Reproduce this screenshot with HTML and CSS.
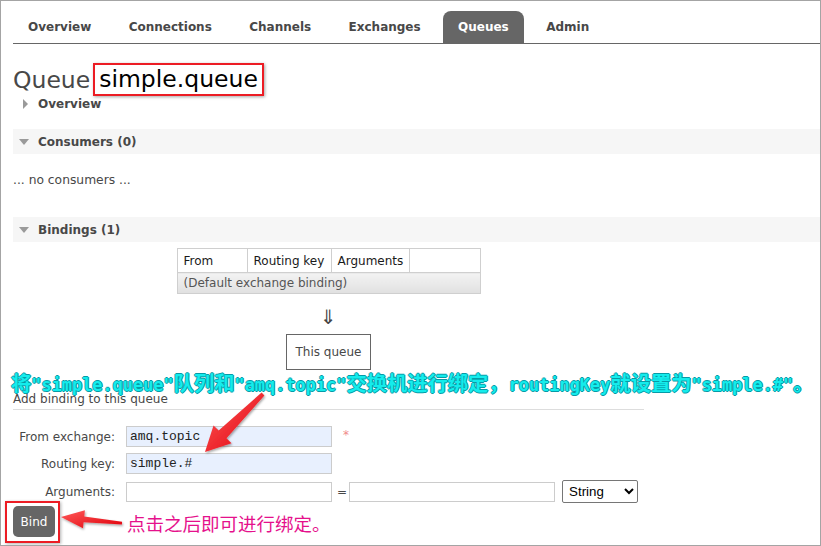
FILE: index.html
```html
<!DOCTYPE html>
<html lang="zh">
<head>
<meta charset="utf-8">
<title>Queue simple.queue</title>
<link rel="stylesheet" href="styles.css">
</head>
<body>
<div class="frame">
  <ul class="tabs">
    <li>Overview</li>
    <li>Connections</li>
    <li>Channels</li>
    <li>Exchanges</li>
    <li class="active">Queues</li>
    <li>Admin</li>
  </ul>

  <h1 class="title"><span class="lbl">Queue</span><span class="qname">simple.queue</span></h1>
  <div class="toggle"><span class="tri-r"></span>Overview</div>

  <div class="section-bar consumers"><span class="tri-d"></span>Consumers (0)</div>
  <p class="empty">... no consumers ...</p>

  <div class="section-bar bindings-bar"><span class="tri-d"></span>Bindings (1)</div>

  <div class="bindings">
    <table class="btable">
      <colgroup><col class="c1"><col class="c2"><col class="c3"><col class="c4"></colgroup>
      <thead>
        <tr><th>From</th><th>Routing key</th><th>Arguments</th><th></th></tr>
      </thead>
      <tbody>
        <tr><td colspan="4">(Default exchange binding)</td></tr>
      </tbody>
    </table>
    <div class="down">⇓</div>
    <div class="thisq">This queue</div>

    <h3 class="addh">Add binding to this queue</h3>
    <form class="bform">
      <div class="frow">
        <label class="flabel">From exchange:</label>
        <input class="fin auto" type="text" value="amq.topic">
        <span class="req">*</span>
      </div>
      <div class="frow">
        <label class="flabel">Routing key:</label>
        <input class="fin auto" type="text" value="simple.#">
      </div>
      <div class="frow r3">
        <label class="flabel">Arguments:</label>
        <input class="fin" type="text">
        <span class="eq">=</span>
        <input class="fin" type="text">
        <select class="fsel"><option>String</option></select>
      </div>
      <button type="button" class="bind">Bind</button>
    </form>
  </div>

  <div class="note-cyan">将<span class="m">"simple.queue"</span>队列和<span class="m">"amq.topic"</span>交换机进行绑定，<span class="m">routingKey</span>就设置为<span class="m">"simple.#"</span>。</div>
  <div class="note-pink">点击之后即可进行绑定。</div>
  <div class="redbox bindbox"></div>

  <svg class="arrows" width="821" height="546" viewBox="0 0 821 546">
    <defs>
      <linearGradient id="ag" x1="0" y1="0" x2="1" y2="1">
        <stop offset="0" stop-color="#ff5a5a"/>
        <stop offset="1" stop-color="#e0000a"/>
      </linearGradient>
      <filter id="sh" x="-20%" y="-20%" width="140%" height="140%">
        <feDropShadow dx="1" dy="1.5" stdDeviation="1.2" flood-color="#000" flood-opacity="0.35"/>
      </filter>
    </defs>
    <polygon filter="url(#sh)" fill="url(#ag)" points="264.4,395.4 226.5,438.3 231.5,443.3 205,452 213.5,425.5 218.7,430.5 261.6,392.6"/>
    <polygon filter="url(#sh)" fill="url(#ag)" points="122.1,521.7 84.3,516.4 84.9,510.2 61,517 83,528.2 83.6,522.2 121.9,524.6"/>
  </svg>
</div>
</body>
</html>
```

FILE: styles.css
```css
* { box-sizing: border-box; }

html, body {
  margin: 0;
  padding: 0;
  background: #fff;
}

body {
  font-family: "DejaVu Sans", Verdana, sans-serif;
  font-size: 12px;
  color: #484848;
}

.frame {
  position: relative;
  width: 821px;
  height: 546px;
  border: 1px solid #a4a4a4;
  padding: 10px 0 0 12px;
  overflow: hidden;
}

/* tabs */
.tabs {
  list-style: none;
  margin: 0;
  padding: 0;
  display: flex;
  gap: 7.4px;
  border-bottom: 1px solid #666;
  height: 33px;
}
.tabs li {
  height: 32px;
  line-height: 33px;
  padding: 0 15px;
  font-weight: bold;
  font-size: 12px;
  color: #484848;
  border-radius: 8px 8px 0 0;
}
.tabs li.active {
  background: #666;
  color: #fff;
}

/* title */
.title {
  margin: 19px 0 0 0;
  height: 33px;
  display: flex;
  align-items: center;
  gap: 3px;
  font-weight: normal;
  font-size: 23.5px;
  color: #484848;
}
.title .qname {
  color: #000;
  border: 2px solid #ec1c24;
  padding: 0 4px;
  line-height: 29px;
  box-shadow: 1px 1px 3px rgba(0,0,0,0.35);
}

.toggle {
  height: 16px;
  line-height: 16px;
  display: flex;
  align-items: center;
  font-weight: bold;
  color: #484848;
  margin-top: 0;
}
.tri-r {
  width: 0;
  height: 0;
  border-top: 5px solid transparent;
  border-bottom: 5px solid transparent;
  border-left: 5px solid #9a9a9a;
  margin: 0 10px 0 10px;
}

.section-bar {
  height: 25px;
  background: #f6f6f6;
  display: flex;
  align-items: center;
  font-weight: bold;
  color: #484848;
}
.consumers { margin-top: 17px; }
.bindings-bar { margin-top: 29px; }
.tri-d {
  width: 0;
  height: 0;
  border-left: 5px solid transparent;
  border-right: 5px solid transparent;
  border-top: 6px solid #9a9a9a;
  margin: 0 9px 0 6px;
}

.empty {
  margin: 18px 0 0 0;
  height: 16px;
  line-height: 16px;
  font-size: 12.3px;
}

/* bindings */
.bindings {
  width: 631px;
  display: flex;
  flex-direction: column;
  align-items: center;
}
.btable {
  margin-top: 6px;
  border-collapse: collapse;
  table-layout: fixed;
  width: 303px;
  border: 1px solid #cfcfcf;
}
.btable col.c1 { width: 70px; }
.btable col.c2 { width: 84px; }
.btable col.c3 { width: 78px; }
.btable col.c4 { width: 71px; }
.btable th {
  height: 24px;
  padding: 0 6px;
  text-align: left;
  font-weight: normal;
  color: #1a1a1a;
  border: 1px solid #cfcfcf;
  white-space: nowrap;
}
.btable td {
  height: 21px;
  padding: 0 6px;
  color: #555;
  background: linear-gradient(#f3f3f3, #e0e0e0);
  border: 1px solid #cfcfcf;
}
.down {
  margin-top: 12px;
  font-size: 20px;
  line-height: 22px;
  color: #444;
}
.thisq {
  margin-top: 6px;
  height: 36px;
  line-height: 34px;
  padding: 0 9px;
  border: 1px solid #666;
  color: #484848;
}
.addh {
  align-self: stretch;
  margin: 21px 0 0 0;
  font-size: 12px;
  font-weight: normal;
  line-height: 16px;
  padding-bottom: 2px;
  border-bottom: 1px solid #ddd;
  color: #484848;
}

.bform {
  align-self: stretch;
  margin-top: 16px;
  display: flex;
  flex-direction: column;
  gap: 6px;
}
.frow {
  display: flex;
  align-items: center;
  height: 21px;
}
.frow.r3 { height: 23px; }
.flabel {
  width: 102px;
  text-align: right;
  margin-right: 11px;
  color: #484848;
}
.fin {
  width: 206px;
  height: 21px;
  border: 1px solid #ccc;
  padding: 0 3px;
  font-family: "Liberation Mono", monospace;
  font-size: 13px;
  color: #222;
  background: #fff;
  outline: none;
}
.fin.auto { background: #e8f0fe; }
.r3 .fin { height: 20px; }
.req {
  color: #f08a8a;
  margin-left: 11px;
  font-size: 12px;
  position: relative;
  top: -2px;
}
.eq {
  margin: 0 2px 0 5px;
  color: #484848;
}
.fsel {
  margin-left: 7px;
  width: 76px;
  height: 23px;
  border: 1px solid #767676;
  border-radius: 2px;
  background: #fff;
  font-family: "Liberation Sans", Arial, sans-serif;
  font-size: 13.3px;
  color: #000;
  padding: 0 2px;
}
.bind {
  margin-top: -3px;
  width: 42px;
  height: 31px;
  border: none;
  border-radius: 5px;
  background: #666;
  color: #fff;
  font-family: "DejaVu Sans", Verdana, sans-serif;
  font-size: 12px;
  padding: 0;
}

/* annotations (overlays) */
.note-cyan {
  position: absolute;
  left: 10px;
  top: 371px;
  line-height: 20px;
  white-space: nowrap;
  font-family: "Noto Sans CJK SC", sans-serif;
  font-weight: bold;
  font-size: 20.3px;
  color: #14ecec;
  text-shadow: 1px 0 0 #079aa6, -1px 0 0 #079aa6, 0 1px 0 #079aa6, 0 -1px 0 #079aa6;
}
.note-cyan .m {
  font-family: "DejaVu Sans Mono", monospace;
  font-size: 16.9px;
  font-weight: bold;
}
.note-pink {
  position: absolute;
  left: 126px;
  top: 512px;
  line-height: 20px;
  white-space: nowrap;
  font-family: "Noto Sans CJK SC", sans-serif;
  font-size: 18.5px;
  color: #e5118c;
}
.redbox {
  position: absolute;
  border: 2px solid #ec1c24;
  box-shadow: 1px 1px 3px rgba(0,0,0,0.3);
}
.bindbox {
  left: 4px;
  top: 500px;
  width: 55px;
  height: 42px;
}
.arrows {
  position: absolute;
  left: -1px;
  top: -1px;
  pointer-events: none;
}
```
